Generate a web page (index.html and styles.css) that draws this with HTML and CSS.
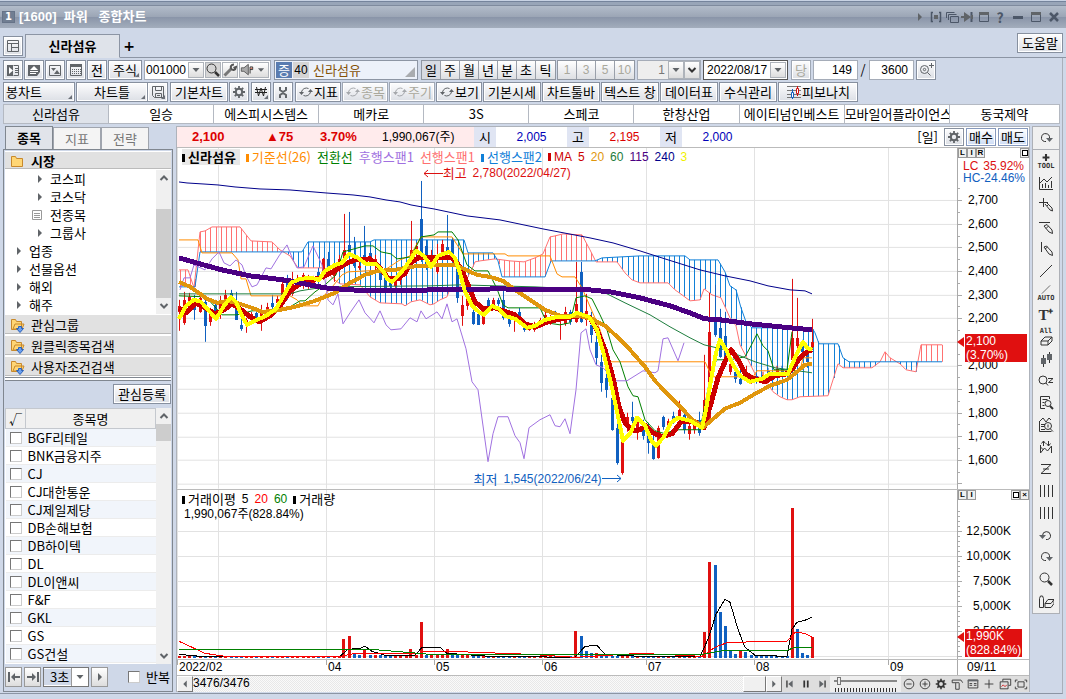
FILE: index.html
```html
<!DOCTYPE html>
<html lang="ko">
<head>
<meta charset="utf-8">
<title>[1600] 파워 종합차트</title>
<link rel="stylesheet" href="styles.css">
</head>
<body>
<svg class="defs" aria-hidden="true">
  <symbol id="i-layout" viewBox="0 0 16 16"><path d="M2.500 2.500h11v11h-11zM2.500 5.500h11M6.500 5.500v8M6.500 9.500h7"/></symbol>
  <symbol id="i-panel" viewBox="0 0 16 16"><path class="f" d="M2 3h6v11H2z"/><path d="M8.500 3.500h5v10h-5M10 6.500h3M10 8.500h3M10 10.500h3"/><path class="w" d="M4 5l4 3.500L4 12z"/></symbol>
  <symbol id="i-eject" viewBox="0 0 16 16"><path class="f" d="M2 3h12v7l-3 4H2z"/><path class="w" d="M8 4l4 4H4zM4 9h8v1H4zM4 11h6v1H4z"/></symbol>
  <symbol id="i-swap" viewBox="0 0 16 16"><path d="M2.500 3.500h11v10h-11z"/><path class="f" d="M4 6h5L6.500 9zM7 12l3-4 3 4z"/></symbol>
  <symbol id="i-cal" viewBox="0 0 16 16"><path d="M2.500 2.500h11v11h-11z"/><path class="f" d="M2 2h12v3H2z"/><path stroke-dasharray="1 1" d="M4 7.500h9M4 9.500h9M4 11.500h9"/></symbol>
  <symbol id="i-glass" viewBox="0 0 16 16"><circle cx="6.500" cy="6.500" r="4.500"/><path stroke-width="2.500" d="M10 10l4 4"/></symbol>
  <symbol id="i-wrench" viewBox="0 0 16 16"><path stroke-width="3" stroke="#777" d="M2.500 13.500L9 7"/><path stroke-width="2" stroke="#555" d="M12 2.500c-3 0-4 2.500-2.500 4.500s4 1 4.500-2l-2.500 1"/></symbol>
  <symbol id="i-horn" viewBox="0 0 16 16"><path fill="#aaa" stroke="#555" d="M1.500 5.500h3l5-4v12l-5-4h-3z"/><path stroke="#222" d="M11.500 12V4.500h3v3h-3"/><path stroke="#d04020" d="M12 6h2"/></symbol>
  <symbol id="i-gear" viewBox="0 0 16 16"><circle cx="8" cy="8" r="3.200" stroke-width="2"/><path stroke-width="1.800" d="M8 2v2.500M8 11.500V14M2 8h2.500M11.500 8H14M3.800 3.800l1.700 1.700M10.500 10.500l1.700 1.700M3.800 12.200l1.700-1.700M10.500 5.500l1.700-1.700"/></symbol>
  <symbol id="i-save" viewBox="0 0 16 16"><path d="M2.500 2.500h11v11h-9l-2-2zM5.500 2.500v4h6v-4M5.500 13.500v-4h6v4M7 11.500h3"/></symbol>
  <symbol id="i-fork" viewBox="0 0 16 16"><path stroke-width="2" d="M5 3v3l3 2 3-2V3M8 7v2M5 14v-3l3-2 3 2v3"/></symbol>
  <symbol id="i-cycle" viewBox="0 0 16 16"><path d="M3.500 8a5 5 0 0 1 7-3.500M12.500 8a5 5 0 0 1-7 3.500"/><path class="f" d="M1 8h5l-2.500 3zM10 8h5l-2.500-3z"/></symbol>
  <symbol id="i-fibo" viewBox="0 0 16 16"><path d="M1 2.500h14M1 6.500h14M1 10.500h14M1 13.500h14" stroke="#777"/><path d="M6.500 5v10" stroke="#1460c0"/><path d="M5.500 8.500h2v5h-2z" fill="#fff" stroke="#1460c0"/><path d="M11.500 2v10" stroke="#d01010"/><path d="M10.500 4.500h2v5h-2z" fill="#fff" stroke="#d01010"/></symbol>
  <symbol id="i-zoomset" viewBox="0 0 16 16"><circle cx="6.500" cy="7.500" r="4"/><circle cx="6.500" cy="7.500" r="1.200"/><path d="M9.500 10.500l3 3M11 3.500h5M13.500 1v5"/></symbol>
  <symbol id="i-redo" viewBox="0 0 16 16"><path d="M8 11.500H6.500a4 4 0 1 1 5-3.500"/><path class="f" d="M8 8h7l-3.500 4z"/></symbol>
  <symbol id="i-undo" viewBox="0 0 16 16"><path d="M8 12.500h1.500a4 4 0 1 0-5-4"/><path class="f" d="M1 8h7l-3.500 4z"/></symbol>
  <symbol id="i-plus" viewBox="0 0 16 16"><path d="M8 3v10M3 8h10"/></symbol>
  <symbol id="i-bold-plus" viewBox="0 0 16 16"><path stroke-width="3" d="M8 3v10M3 8h10"/></symbol>
  <symbol id="i-chart" viewBox="0 0 16 16"><path d="M1.500 2v12.500H15M2 8l4-4 3 3 5-5M4.500 13V9M7.500 13V8M10.500 13v-3M13.500 13V6"/></symbol>
  <symbol id="i-pencross" viewBox="0 0 16 16"><path d="M1 5.500h9M5.500 1v9M7 7l5 6 2.500 1L14 11 9 6M9 9l2-2"/></symbol>
  <symbol id="i-penline" viewBox="0 0 16 16"><path d="M1 3.500h11M6 7l5 6 3.500 1.500L14 11 9 5.500zM8 9.500l2.500-2.500"/></symbol>
  <symbol id="i-penvert" viewBox="0 0 16 16"><path d="M3.500 1v10M6 6l5 7 3.500 1.500L14 11 8.500 5zM7 8l2.500-2"/></symbol>
  <symbol id="i-line" viewBox="0 0 16 16"><path d="M2 14L14 2"/></symbol>
  <symbol id="i-erase" viewBox="0 0 16 10"><path d="M3 5.500l4-4h7l-4 4zM3 5.500v4h7l4-4v-4M10 5.500v4"/></symbol>
  <symbol id="i-candle" viewBox="0 0 16 16"><path d="M5.500 4v12M11.500 1v11"/><path class="f" d="M3 7h5v6H3zM9 3h5v6H9z"/></symbol>
  <symbol id="i-findz" viewBox="0 0 16 16"><circle cx="5" cy="7" r="4"/><path d="M8 10l2 2.500M10 5.500h5L10.500 9.500H15"/></symbol>
  <symbol id="i-docfind" viewBox="0 0 16 16"><path d="M7 13.500H2.500v-12h9V4M4.500 4.500h5M4.500 7.500h2M4.500 10.500h2"/><circle cx="10" cy="8.500" r="3"/><path stroke-width="2" d="M12 11l3 3"/></symbol>
  <symbol id="i-chartfind" viewBox="0 0 16 16"><path d="M1.500 4v10.500h12M2 4l3-3 3 4 3-4 2 2M3 7.500h4M3 9.500h3M3 12.500h4"/><circle cx="10" cy="9" r="3.500"/><path d="M10 7.500v3M12 11.500l3 3"/></symbol>
  <symbol id="i-wave" viewBox="0 0 16 16"><path d="M2.500 6v8l4-5 3 3 4-5v7M2.500 8l3 3M5.500 2v5M3.500 4.500l2-2.500 2 2.500M10.500 2v5M8.500 4.500l2 2.500 2-2.500"/></symbol>
  <symbol id="i-zig" viewBox="0 0 16 16"><path d="M3 3.500h10L3 12.500h10M5 8h6"/></symbol>
  <symbol id="i-bars" viewBox="0 0 16 16"><path d="M2.500 2v12M6.500 2v12M10.500 2v12M14.500 2v12"/></symbol>
  <symbol id="i-bottle" viewBox="0 0 16 16"><path d="M1.500 5.500v9h4v-9L4.500 3h-2zM7 10.500l3-4h6l-3 4zM7 10.500v4h6l3-4v-4"/></symbol>
  <symbol id="i-folder" viewBox="0 0 16 16"><path fill="#ffd675" stroke="#c8892c" d="M2.500 3.500h4l1 2h6v8h-11z"/></symbol>
  <symbol id="i-folderdn" viewBox="0 0 16 16"><path fill="#ffd675" stroke="#c8892c" d="M2.500 2.500h4l1 2h5v8h-10zM4 12l2-5h9l-2 5z"/><path fill="#6aa0f0" stroke="#2c62b8" d="M9.500 9.500h3v2h2l-3.500 4-3.500-4h2z"/></symbol>
  <symbol id="i-doc" viewBox="0 0 16 16"><path d="M3.500 3.500h9v9h-9zM5 6.500h6M5 8.500h6M5 10.500h6"/></symbol>
  <symbol id="i-up" viewBox="0 0 16 16"><path stroke-width="2" d="M4.500 10L8 6.500l3.500 3.500"/></symbol>
  <symbol id="i-down" viewBox="0 0 16 16"><path stroke-width="2" d="M4.500 6L8 9.500 11.500 6"/></symbol>
  <symbol id="i-tri" viewBox="0 0 16 16"><path class="f" d="M4.500 6h7L8 10z"/></symbol>
  <symbol id="i-right" viewBox="0 0 16 16"><path class="f" d="M6 4l4 4-4 4z"/></symbol>
  <symbol id="i-left" viewBox="0 0 16 16"><path class="f" d="M10 4L6 8l4 4z"/></symbol>
  <symbol id="i-first" viewBox="0 0 16 16"><path stroke-width="2" d="M3 3v10M6 8h8"/><path class="f" d="M9 4v8L5 8z"/></symbol>
  <symbol id="i-last" viewBox="0 0 16 16"><path stroke-width="2" d="M13 3v10M2 8h8"/><path class="f" d="M7 4v8l4-4z"/></symbol>
  <symbol id="i-prev" viewBox="0 0 16 16"><path stroke-width="1.500" d="M4.500 4v8"/><path class="f" d="M11 4v8L6 8z"/></symbol>
  <symbol id="i-pause" viewBox="0 0 16 16"><path stroke-width="2" d="M6 4v8M10 4v8"/></symbol>
  <symbol id="i-next" viewBox="0 0 16 16"><path stroke-width="1.500" d="M11.500 4v8"/><path class="f" d="M5 4v8l5-4z"/></symbol>
  <symbol id="i-zin" viewBox="0 0 16 16"><circle cx="8" cy="8" r="5.500"/><path d="M5 8h6M8 5v6"/></symbol>
  <symbol id="i-zout" viewBox="0 0 16 16"><circle cx="8" cy="8" r="5.500"/><path d="M5 8h6"/></symbol>
  <symbol id="i-hammer" viewBox="0 0 16 16"><path d="M2.500 3.500h10l2 3M2.500 3.500v3h8M6.500 7v7h4V7"/></symbol>
  <symbol id="i-table" viewBox="0 0 16 16"><path d="M2.500 3.500h11v9h-11zM4 7.500h3M9 7.500h3M4 9.500h3M9 9.500h3"/><path class="f" d="M2 3h12v2H2z"/></symbol>
  <symbol id="i-copy" viewBox="0 0 16 16"><path d="M5.500 5V2.500h9v7H12M2.500 5.500h9v8h-9z"/><path stroke="#d01010" d="M4 11l2-2 2 2 2-2"/></symbol>
  <symbol id="i-full" viewBox="0 0 16 16"><path d="M4.500 5.500h7v6h-7zM1.500 6V3.500H4M12 3.500h2.500V6M1.500 11v2.500H4M12 13.500h2.500V11"/></symbol>
  <symbol id="i-braces" viewBox="0 0 16 16"><path stroke-width="1.500" d="M5 3.500H3.500v9H5M11 3.500h1.500v9H11"/><path class="f" d="M6 6h4v4H6z"/></symbol>
  <symbol id="i-stack" viewBox="0 0 16 16"><path d="M6.500 7.500h8v6h-8zM4.500 11V5.500h8M2.500 9V3.500h8"/></symbol>
  <symbol id="i-pin" viewBox="0 0 16 16"><path d="M11.500 3v10" stroke-width="2"/><path class="f" d="M4 3l7 5-7 5V9H1V7h3zM11 6h2v4h-2z"/></symbol>
  <symbol id="i-win" viewBox="0 0 16 16"><path d="M3.500 4.500h9v8h-9z"/><path class="f" d="M3 3h10v3H3z"/></symbol>
  <symbol id="i-min" viewBox="0 0 16 16"><path stroke-width="3" d="M3 8.500h10"/></symbol>
  <symbol id="i-close" viewBox="0 0 16 16"><path stroke-width="2.500" d="M4 4l8 8M12 4l-8 8"/></symbol>
  <symbol id="i-won" viewBox="0 0 16 16"><path stroke="#222" d="M3.500 3l2 9L8 4l2.500 8 2-9M2 5.500h12M2 8.500h12"/></symbol>
</svg>

<header class="titlebar">
  <span class="num">1</span>
  <h1>[1600]&nbsp; 파워&nbsp;&nbsp; 종합차트</h1>
  <div class="winctl">
    <button aria-label="펼치기"><svg><use href="#i-right"/></svg></button><button aria-label="연동"><svg><use href="#i-braces"/></svg></button><button aria-label="복사"><svg><use href="#i-stack"/></svg></button><button aria-label="고정"><svg><use href="#i-pin"/></svg></button><button aria-label="창"><svg><use href="#i-win"/></svg></button><button aria-label="도움">?</button><button aria-label="최소화"><svg><use href="#i-min"/></svg></button><button aria-label="최대화"><svg><use href="#i-win"/></svg></button><button aria-label="닫기"><svg><use href="#i-close"/></svg></button>
  </div>
</header>

<nav class="tabs">
  <button class="btn sq" aria-label="레이아웃"><svg><use href="#i-layout"/></svg></button>
  <button class="tab">신라섬유</button>
  <button class="add" aria-label="탭 추가">+</button>
  <button class="btn help">도움말</button>
</nav>

<div class="work">
  <div class="bar">
    <button class="btn sq" aria-label="패널"><svg><use href="#i-panel"/></svg></button>
    <button class="btn sq" aria-label="상단"><svg><use href="#i-eject"/></svg></button>
    <button class="btn sq" aria-label="교체"><svg><use href="#i-swap"/></svg></button>
    <button class="btn sq" aria-label="달력"><svg><use href="#i-cal"/></svg></button>
    <button class="btn sq">전</button>
    <button class="btn w34 corner">주식</button>
    <div class="group code">
      <input aria-label="종목코드" value="001000">
      <button class="mini" aria-label="목록"><svg><use href="#i-tri"/></svg></button>
      <button class="mini dark" aria-label="검색"><svg><use href="#i-glass"/></svg></button>
      <button class="mini" aria-label="설정"><svg><use href="#i-wrench"/></svg></button>
      <button class="mini wide" aria-label="음성"><svg><use href="#i-horn"/></svg><svg><use href="#i-tri"/></svg></button>
    </div>
    <div class="group stock corner"><b class="kind">증</b><span class="rate">40</span><span>신라섬유</span></div>
    <div class="seg period">
      <button class="on">일</button><button>주</button><button>월</button><button>년</button><button>분</button><button>초</button><button>틱</button>
    </div>
    <div class="seg off">
      <button disabled>1</button><button disabled>3</button><button disabled>5</button><button disabled>10</button>
    </div>
    <div class="group unit">
      <input aria-label="단위" value="1" disabled><button class="mini" aria-label="단위 목록"><svg><use href="#i-tri"/></svg></button><button class="mini" aria-label="단위 선택"><svg><use href="#i-down"/></svg></button>
    </div>
    <div class="group date"><input aria-label="날짜" value="2022/08/17"><button class="mini" aria-label="날짜 선택"><svg><use href="#i-tri"/></svg></button></div>
    <button class="btn sq" disabled>당</button>
    <input class="box" aria-label="표시 개수" value="149"><span class="slash">/</span><input class="box" aria-label="전체 개수" value="3600">
    <button class="btn sq last" aria-label="확대 설정"><svg><use href="#i-zoomset"/></svg></button>
  </div>

  <div class="bar second">
    <button class="btn w72 lt corner">봉차트</button>
    <div class="pair"><button class="btn w72 corner">차트틀</button><button class="btn sq corner" aria-label="저장"><svg><use href="#i-save"/></svg></button></div>
    <button class="btn w58">기본차트</button>
    <button class="btn sq" aria-label="환경"><svg><use href="#i-gear"/></svg></button>
    <button class="btn sq corner" aria-label="원화"><svg><use href="#i-won"/></svg></button>
    <button class="btn sq" aria-label="도구"><svg><use href="#i-fork"/></svg></button>
    <button class="btn w46"><svg><use href="#i-cycle"/></svg>지표</button>
    <button class="btn w46" disabled><svg><use href="#i-cycle"/></svg>종목</button>
    <button class="btn w46" disabled><svg><use href="#i-cycle"/></svg>주기</button>
    <button class="btn w46"><svg><use href="#i-cycle"/></svg>보기</button>
    <button class="btn w58">기본시세</button>
    <button class="btn w58">차트툴바</button>
    <button class="btn w58">텍스트 창</button>
    <button class="btn w58">데이터표</button>
    <button class="btn w58">수식관리</button>
    <button class="btn w80"><svg><use href="#i-fibo"/></svg>피보나치</button>
  </div>

  <nav class="recent">
    <button class="on">신라섬유</button><button>일승</button><button>에스피시스템스</button><button>메카로</button><button>3S</button><button>스페코</button><button>한창산업</button><button>에이티넘인베스트</button><button>모바일어플라이언스</button><button>동국제약</button>
  </nav>

  <main class="main">
    <aside class="side">
      <div class="sidetabs"><button class="on">종목</button><button>지표</button><button>전략</button></div>
      <div class="sidebox">
        <button class="sec first"><svg><use href="#i-folder"/></svg>시장</button>
        <div class="scrolled tree">
          <ul>
            <li class="sub"><svg><use href="#i-right"/></svg>코스피</li>
            <li class="sub"><svg><use href="#i-right"/></svg>코스닥</li>
            <li class="sub leaf"><svg><use href="#i-doc"/></svg>전종목</li>
            <li class="sub"><svg><use href="#i-right"/></svg>그룹사</li>
            <li><svg><use href="#i-right"/></svg>업종</li>
            <li><svg><use href="#i-right"/></svg>선물옵션</li>
            <li><svg><use href="#i-right"/></svg>해외</li>
            <li><svg><use href="#i-right"/></svg>해주</li>
          </ul>
          <div class="vscroll"><svg><use href="#i-up"/></svg><i class="gap"></i><i class="thumb"></i><svg><use href="#i-down"/></svg></div>
        </div>
        <button class="sec"><svg><use href="#i-folderdn"/></svg>관심그룹</button>
        <button class="sec"><svg><use href="#i-folderdn"/></svg>원클릭종목검색</button>
        <button class="sec"><svg><use href="#i-folderdn"/></svg>사용자조건검색</button>
        <div class="split"></div>
        <div class="reg"><button class="btn w58">관심등록</button></div>
        <div class="scrolled list">
          <table>
            <thead><tr><th>√</th><th>종목명</th></tr></thead>
            <tbody id="rows"></tbody>
          </table>
          <div class="vscroll"><svg><use href="#i-up"/></svg><i class="thumb short"></i><i class="rest"></i><svg><use href="#i-down"/></svg></div>
        </div>
        <div class="player">
          <button aria-label="처음"><svg><use href="#i-first"/></svg></button>
          <button aria-label="마지막"><svg><use href="#i-last"/></svg></button>
          <div class="sec3"><select aria-label="간격"><option>3초</option></select><svg><use href="#i-tri"/></svg></div>
          <button aria-label="재생"><svg><use href="#i-right"/></svg></button>
          <label><input type="checkbox">반복</label>
        </div>
      </div>
    </aside>

    <section class="center">
      <div class="quote">
        <div class="pink"><b>2,100</b><b>▲75</b><b>3.70%</b><span>1,990,067(주)</span></div>
        <span class="key">시</span><span class="val blue">2,005</span>
        <span class="key">고</span><span class="val red">2,195</span>
        <span class="key">저</span><span class="val blue">2,000</span>
        <span class="day">[일]</span>
        <button class="btn sq" aria-label="설정"><svg><use href="#i-gear"/></svg></button>
        <button class="btn buy">매수</button><button class="btn buy">매도</button>
      </div>

      <div class="pane price">
        <div class="plot">
          <svg id="price" viewBox="177 148 780 341" preserveAspectRatio="none"></svg>
          <div class="legend">
            <b class="mark name">신라섬유</b><span class="mark c-base">기준선(26)</span><span class="c-conv">전환선</span><span class="c-lag">후행스팬1</span><span class="c-s1">선행스팬1</span><span class="mark c-s2">선행스팬2</span><span class="mark c-ma5 n">MA</span><span class="c-ma5 n">5</span><span class="c-ma20 n">20</span><span class="c-ma60 n">60</span><span class="c-ma115 n">115</span><span class="c-ma240 n">240</span><span class="c-ma3 n">3</span>
          </div>
          <div class="note high"><svg viewBox="0 0 20 9"><path d="M20 4.500H1M5 1L1 4.500 5 8"/></svg><span>최고</span><span class="n">2,780(2022/04/27)</span></div>
          <div class="note low"><span>최저</span><span class="n">1,545(2022/06/24)</span><svg viewBox="0 0 20 9"><path d="M0 4.500h19M15 1l4 3.500L15 8"/></svg></div>
        </div>
        <div class="axis" id="priceAxis">
          <div class="axhead"><button>L</button><button>I</button><button>R</button><button class="end" aria-label="최대화"><i></i></button></div>
          <p class="lc"><span>LC</span><span>35.92%</span></p>
          <p class="hc"><span>HC</span><span>-24.46%</span></p>
        </div>
      </div>

      <div class="pane volume">
        <div class="plot">
          <svg id="volume" viewBox="177 491 780 169" preserveAspectRatio="none"></svg>
          <div class="legend vol">
            <span class="mark">거래이평</span><span class="n">5</span><span class="v20 n">20</span><span class="v60 n">60</span><span class="mark">거래량</span>
          </div>
          <div class="legend vol2 n">1,990,067주(828.84%)</div>
        </div>
        <div class="axis" id="volAxis">
          <div class="axhead"><button>L</button><button>I</button><button class="end" aria-label="최대화"><i></i></button><button>×</button></div>
        </div>
      </div>

      <div class="time n"><div class="months" id="months"></div><span class="lastday">09/11</span></div>

      <div class="foot">
        <button class="arrow" aria-label="이전"><svg><use href="#i-left"/></svg></button>
        <div class="track n">3476/3476</div>
        <button class="arrow handle" aria-label="스크롤"></button>
        <button class="arrow" aria-label="다음"><svg><use href="#i-right"/></svg></button>
        <div class="ctl"><button aria-label="뒤로"><svg><use href="#i-prev"/></svg></button><button aria-label="멈춤"><svg><use href="#i-pause"/></svg></button><button aria-label="앞으로"><svg><use href="#i-next"/></svg></button></div>
        <div class="slide"><input type="range" aria-label="속도" value="5"></div>
        <div class="ctl"><button aria-label="축소"><svg><use href="#i-zout"/></svg></button><button aria-label="확대"><svg><use href="#i-zin"/></svg></button><button aria-label="환경"><svg><use href="#i-gear"/></svg></button><button aria-label="도구"><svg><use href="#i-hammer"/></svg></button><button aria-label="표"><svg><use href="#i-table"/></svg></button><button aria-label="십자선"><svg><use href="#i-plus"/></svg></button><button aria-label="복사"><svg><use href="#i-copy"/></svg></button><button aria-label="전체"><svg><use href="#i-full"/></svg></button></div>
      </div>
    </section>

    <div class="toolcol"><div class="tools" id="tools"></div></div>
  </main>
</div>
<script src="app.js"></script>
</body>
</html>
```
FILE: styles.css
```css
* { box-sizing: border-box; }
body {
  margin: 0; min-height: 100vh; display: flex; flex-direction: column;
  background: #cfd8e8; color: #000;
  font: 13px/16px "Noto Sans CJK KR", sans-serif;
}
button, input, select { font: inherit; color: inherit; margin: 0; }
button { padding: 0; border: 0; background: none; white-space: nowrap; }
h1, p, ul { margin: 0; padding: 0; list-style: none; font-size: 13px; }
svg { width: 16px; height: 16px; flex: none; fill: none; stroke: #606468; stroke-width: 1; display: block; }
svg .f { fill: #606468; stroke: none; }
svg .w { fill: #fff; stroke: none; }
.defs { position: absolute; width: 0; height: 0; }
.n, .bar input, .off button, .axis, .val, .pink, .rate { font-family: "Liberation Sans", "Noto Sans CJK KR", sans-serif; font-size: 12px; }

.titlebar {
  height: 28px; padding: 5px 4px 0 2px; display: flex; align-items: center; gap: 4px; color: #fff;
  background: linear-gradient(#c8d3e4 0 1px, #75849c 1px 2px, #98a5b8 2px 5px, #7f8b9e 5px 6px, #b2bcca 6px, #9ba5b5 17px, #8994a8 17px, #a3adbc 28px);
}
.num { width: 13px; height: 12px; background: #717e92; border: 1px solid #667388; font: bold 10px/10px "DejaVu Sans"; text-align: center; }
.titlebar h1 { font-family: "Liberation Sans", "Noto Sans CJK KR", sans-serif; font-weight: bold; }
.winctl { margin-left: auto; display: flex; }
.winctl button { width: 16px; height: 16px; font-weight: bold; font-size: 14px; color: #4c5768; }
.winctl button:nth-child(n+7) { margin-left: 2px; }
.winctl svg { stroke: #4c5768; }
.winctl svg .f { fill: #4c5768; }

.btn {
  height: 20px; border: 1px solid #87909f; box-shadow: inset 0 0 0 1px #fff;
  background: linear-gradient(#fdfdfe, #dcdfe5); display: flex; align-items: center; justify-content: center;
}
.btn:disabled { color: #a9a89c; border-color: #9fa7b4; }
.btn:disabled svg { opacity: .5; }
.sq { width: 20px; flex: none; }
.w34 { width: 34px; } .w46 { width: 46px; } .w58 { width: 58px; } .w72 { width: 72px; } .w80 { width: 80px; }
.lt { justify-content: flex-start; padding-left: 2px; }
.corner { position: relative; }
.corner::after {
  content: ""; position: absolute; right: 2px; bottom: 2px;
  border: 2px solid; border-color: transparent #6b7078 #6b7078 transparent;
}

.tabs { height: 30px; padding: 5px 3px 0; display: flex; align-items: flex-end; gap: 2px; border-bottom: 1px solid #8c95a4; }
.tabs .btn.sq { margin-bottom: 1px; }
.tab { width: 95px; height: 24px; margin-bottom: -1px; border: 1px solid #8c95a4; border-bottom-color: #dfe3ea; background: #dfe3ea; font-weight: bold; }
.add { font: bold 14px/22px "DejaVu Sans"; width: 14px; }
.help { width: 46px; margin-left: auto; align-self: flex-start; }

.work { flex: 1; display: flex; flex-direction: column; margin: 0 3px 5px 0; padding: 2px 2px 1px 3px; border-right: 1px solid #a9afb9; border-bottom: 1px solid #8c95a4; gap: 2px; }
.bar { display: flex; gap: 1px; align-items: center; height: 20px; }
.bar > .btn, .second > * { flex: none; }
.group { height: 20px; display: flex; align-items: center; gap: 1px; border: 1px solid #a5acb8; background: #fff; padding: 1px; flex: none; }
.group input { border: 0; background: none; min-width: 0; flex: 1; padding: 0 0 0 2px; height: 16px; }
.code { width: 127px; margin: 0 2px 0 1px; }
.group.code input { padding: 0; }
.mini { width: 16px; height: 16px; border: 1px solid #aeb3ba; background: linear-gradient(#fff, #ddd); display: flex; align-items: center; justify-content: center; overflow: hidden; flex: none; }
.mini svg { stroke: #333; }
.mini svg .f { fill: #000; }
.mini.dark { background: #d6d6d6; }
.mini.wide { width: 30px; }
.mini.wide svg { width: 14px; }
.stock { width: 144px; background: #ecf1fa; color: #855208; border-color: #8c95a4; margin-right: 2px; }
.stock.corner::after { border-width: 5px; border-color: transparent #a9acb0 #a9acb0 transparent; }
.kind { width: 16px; height: 16px; background: #5a7cb0; color: #fff; text-align: center; line-height: 16px; font-weight: normal; }
.rate { width: 16px; height: 16px; line-height: 16px; background: #d5d5d5; color: #000; text-align: center; margin-right: 3px; }
.seg { display: flex; height: 20px; border: 1px solid #9097a2; flex: none; }
.seg button { width: 19px; background: linear-gradient(#fff, #dddfe3); border-right: 1px solid #9aa0aa; }
.seg button:last-child { border-right: 0; }
.seg .on { background: #d8dbe2; }
.seg.off button { color: #a9a89c; }
.unit { width: 64px; margin-left: 1px; color: #777; padding: 0; gap: 0; background: #eee; }
.unit input, .box { text-align: right; }
.unit input { padding-right: 3px; }
.unit .mini { height: 18px; }
.unit .mini .f { fill: #888; }
.date { width: 85px; border: 1px solid #555; margin: 0 2px 0 1px; }
.box { width: 45px; height: 20px; border: 1px solid #a5acb8; background: #fff; padding: 0 5px; margin-left: 1px; }
.slash { width: 8px; text-align: center; }
.last { margin-left: 1px; }
.pair { display: flex; margin-right: 1px; }
.second .sq { margin-right: 1px; }
.pair .btn + .btn { margin: 0; border-left: 0; }

.recent { display: flex; height: 20px; border: 1px solid #b4b9c2; flex: none; background: #fff; }
.recent button { flex: 1 1 0; min-width: 0; overflow: hidden; border-right: 1px solid #b4b9c2; }
.recent button:last-child { flex-grow: 1.05; border: 0; }
.recent .on { background: #dfe3ea; }

.main { flex: 1; display: flex; min-height: 0; }
.side { width: 170px; margin-right: 3px; display: flex; flex-direction: column; flex: none; }
.sidetabs { display: flex; padding-left: 2px; height: 23px; align-items: flex-end; }
.sidetabs button { width: 48px; height: 22px; border: 1px solid #a0a5ae; border-bottom: 0; background: #f4f4f4; color: #777; }
.sidetabs .on { height: 23px; background: #e1e4ea; color: #000; font-weight: bold; border-color: #808790; }
.sidebox { flex: 1; display: flex; flex-direction: column; border: 1px solid #808790; padding: 1px; min-height: 0; }
.sec { height: 21px; width: 100%; flex: none; display: flex; align-items: center; gap: 6px; padding-left: 4px; background: #e1e1e1; border: solid #fff; border-width: 1px 0; box-shadow: inset 0 -1px #bbb; }
.sec.first { font-weight: bold; height: 19px; }
.scrolled { display: flex; background: #fff; overflow: hidden; }
.tree { height: 144px; flex: none; }
.tree ul { flex: 1; }
.tree li { height: 18px; display: flex; align-items: center; gap: 2px; padding-left: 6px; }
.tree .sub { padding-left: 27px; }
.tree .leaf { padding-left: 24px; gap: 5px; }
.tree .leaf svg { stroke: #999; }
.tree svg .f { fill: #777; }
.vscroll { width: 15px; background: #f0f0f0; display: flex; flex-direction: column; align-items: center; flex: none; }
.vscroll .gap { height: 23px; }
.vscroll .thumb { flex: 1; width: 15px; background: #cdcdcd; }
.vscroll .short { flex: none; height: 17px; }
.vscroll .rest { flex: 1; }
.split { height: 4px; flex: none; background: #fff; border: solid #808790; border-width: 1px 0; }
.reg { display: flex; justify-content: flex-end; padding: 3px 0 4px; background: #cfd8e8; }
.list { flex: 1 1 0; min-height: 0; align-items: stretch; }
.list table { flex: 1; border-collapse: collapse; align-self: flex-start; }
.list th { height: 20px; padding: 0; background: #f0f0f0; border: 1px solid #c4c8ce; font-weight: normal; }
.list td { height: 18px; padding: 0 0 0 2px; border-bottom: 1px solid #ececec; }
.list td:first-child { width: 20px; padding-left: 4px; }
.list tr:nth-child(odd) td { background: #f1f5fb; }
.list td label { display: block; line-height: 17px; }
input[type=checkbox] { appearance: none; width: 12px; height: 12px; margin: 0; background: #fff; border: 1px solid; border-color: #777 #ccc #ccc #777; display: block; }
.player { height: 26px; flex: none; display: flex; align-items: center; padding-bottom: 1px; gap: 2px; background: #cfd8e8; }
.player button { width: 17px; height: 20px; border: 1px solid #999; background: linear-gradient(#fff, #ddd); }
.sec3 { width: 46px; height: 20px; display: flex; align-items: center; background: #fff; border: 1px solid #777; }
.sec3 select { appearance: none; width: 27px; height: 16px; line-height: 16px; border: 0; padding: 0 0 0 6px; background: #cfd8e8; }
.sec3 svg { border-left: 1px solid #999; height: 18px; width: 17px; }
.player label { display: flex; align-items: center; gap: 6px; margin-left: auto; padding-right: 1px; }

.center { flex: 1; min-width: 0; display: flex; flex-direction: column; background: #fff; border: solid #aeb3bb; border-width: 1px 1px 0; }
.quote { height: 21px; flex: none; display: flex; align-items: center; border-bottom: 1px solid #bbb; }
.pink { width: 297px; height: 20px; background: #ffebec; display: flex; align-items: center; padding-left: 15px; color: #dc0000; }
.pink b { width: 74px; font-size: 13px; }
.pink b + b { width: 54px; }
.pink b + b + b { width: 62px; }
.pink span { color: #000; }
.key { width: 22px; height: 20px; line-height: 20px; background: #e0e5f3; text-align: center; }
.val { width: 71px; text-align: center; }
.blue { color: #0000b8; } .red { color: #dc0000; }
.day { margin-left: auto; padding-right: 6px; }
.quote .btn { height: 18px; margin-right: 2px; }
.buy { width: 30px; background: linear-gradient(#fff, #cddcf5); border-color: #8699bd; }
.quote .buy:last-child { margin-right: 1px; }

.pane { display: flex; min-height: 0; border-bottom: 1px solid #bbb; }
.price { flex: 342 1 0; }
.volume { flex: 170 1 0; }
.plot { flex: 1; position: relative; min-width: 0; }
.plot > svg { position: absolute; inset: 0; width: 100%; height: 100%; shape-rendering: crispEdges; }
.axis { width: 72px; border-left: 1px solid #aaa; position: relative; flex: none; }
.axhead { display: flex; height: 10px; }
.axhead button { width: 9px; height: 10px; border: 1px solid #999; background: #f0f0f0; font: bold 8px/8px "Liberation Sans"; }
.axhead .end { margin-left: auto; }
.axhead i { display: block; width: 6px; height: 6px; margin: 0 auto; border: 1px solid #000; background: #fff; }
.axis p { display: flex; justify-content: space-between; padding: 0 5px; line-height: 12px; font-size: 12px; }
.lc { color: #dc1010; margin-top: 2px; } .hc { color: #1060c0; }
.axis .lab { position: absolute; left: 10px; transform: translateY(-50%); }
#volAxis .lab { left: auto; right: 18px; }
.axis .tick { position: absolute; left: 0; width: 4px; height: 1px; background: #aaa; }
.axis .minor { width: 2px; }
.axis .flag { position: absolute; left: 7px; width: 62px; height: 28px; background: #e01010; color: #fff; line-height: 14px; padding-left: 1px; margin-top: -8px; }
#volAxis .flag { width: 57px; }
.flag::before { content: ""; position: absolute; left: -8px; top: 3px; border: 5px solid transparent; border-right: 7px solid #e01010; border-left: 0; }
.legend { position: absolute; left: 5px; top: 1px; display: flex; gap: 6px; white-space: nowrap; }
.mark::before { content: ""; display: inline-block; width: 3px; height: 8px; background: currentColor; margin-right: 3px; }
.name { background: #e8e8e8; padding-right: 4px; }
.c-base { color: #ff8c00; } .c-conv { color: #008000; } .c-lag { color: #a070e0; } .c-s1 { color: #ff7070; }
.c-s2 { color: #1080d8; } .c-ma5 { color: #cc0000; } .c-ma20 { color: #e0960c; } .c-ma60 { color: #1c7c3c; }
.c-ma115 { color: #4b0082; } .c-ma240 { color: #00008b; } .c-ma3 { color: #f0f000; }
.v20 { color: #f00; } .v60 { color: #008000; }
.vol2 { top: 16px; left: 7px; }
.note { position: absolute; display: flex; align-items: center; white-space: nowrap; }
.note span + span { margin-left: 6px; }
.note svg { width: 20px; height: 9px; stroke: currentColor; }
.high { left: 31.500%; top: 17px; color: #dc1010; }
.low { right: 43%; bottom: 2px; color: #1060c0; }

.time { height: 16px; flex: none; display: flex; border-bottom: 1px solid #bbb; line-height: 15px; }
.months { flex: 1; position: relative; }
.months span { position: absolute; padding-left: 2px; }
.months span::before { content: ""; position: absolute; left: 0; top: 0; width: 1px; height: 5px; background: #aaa; }
.lastday { width: 72px; border-left: 1px solid #aaa; padding-left: 9px; }
.foot { height: 16px; flex: none; display: flex; background: #e9e9e9; }
.arrow { width: 16px; border: 1px solid; border-color: #fff #777 #777 #fff; background: #f0f0f0; display: flex; align-items: center; justify-content: center; }
.arrow svg, .ctl svg { height: 14px; stroke: #333; }
.arrow .f, .ctl .f { fill: #222; }
.handle { width: 23px; }
.track { flex: 1; background: repeating-conic-gradient(#e8e8e8 0 25%, #fafafa 0 50%) 0 0 / 2px 2px; line-height: 15px; }
.ctl { display: flex; background: #dedede; }
.slide { width: 71px; padding: 1px 4px; background: repeating-linear-gradient(90deg, #333 0 1px, transparent 1px 3px) 5px 100% / 61px 4px no-repeat #eee; }
.slide input { appearance: none; width: 100%; height: 8px; display: block; background: linear-gradient(#888 0 2px, transparent 2px) 0 3px no-repeat; }
.slide input::-webkit-slider-thumb { appearance: none; width: 4px; height: 8px; background: #eee; border: 1px solid #777; }

.toolcol { width: 30px; padding-left: 2px; flex: none; }
.tools { background: #f0f0f0; border: 1px solid #adb0b6; padding-bottom: 1px; }
.tools button { display: flex; flex-direction: column; align-items: center; justify-content: center; width: 100%; height: 22px; font: bold 7px/7px "DejaVu Sans Mono"; color: #333; }
.tools button:first-child { height: 23px; border-bottom: 1px solid #adb0b6; }
.tools svg { stroke: #333; }
.tools .f { fill: #333; }
.tools .labeled svg { height: 11px; }
.tools big { font: bold 15px/16px "Liberation Serif"; }
```
FILE: app.js
```js
const el = (tag, cls, parent, text) => {
  const n = document.createElement(tag);
  if (cls) n.className = cls;
  if (text) n.textContent = text;
  parent.append(n);
  return n;
};
const byId = id => document.getElementById(id);

/* stock list */
['BGF리테일', 'BNK금융지주', 'CJ', 'CJ대한통운', 'CJ제일제당', 'DB손해보험', 'DB하이텍', 'DL', 'DL이앤씨', 'F&F', 'GKL', 'GS', 'GS건설']
  .forEach((name, i) => {
    const tr = el('tr', '', byId('rows'));
    const box = el('input', '', el('td', '', tr));
    box.type = 'checkbox';
    box.id = 's' + i;
    el('label', '', el('td', '', tr), name).htmlFor = box.id;
  });

/* drawing tools */
[['redo'], ['bold-plus', 'TOOL'], ['chart'], ['pencross'], ['penline'], ['penvert'], ['line'], ['line', 'AUTO'], ['', 'T⁺'], ['erase', 'All'],
 ['candle'], ['findz'], ['docfind'], ['chartfind'], ['wave'], ['zig'], ['bars'], ['bars'], ['undo'], ['redo'], ['glass'], ['bottle']]
  .forEach(([icon, label]) => {
    const b = el('button', label ? 'labeled' : '', byId('tools'));
    const svg = icon ? `<svg><use href="#i-${icon}"/></svg>` : '';
    b.innerHTML = label === 'All' ? label + svg : label === 'T⁺' ? '<big>T⁺</big>' : svg + (label || '');
    b.setAttribute('aria-label', label || icon);
  });

/* price pane */
const RED = '#e01010', BLUE = '#1060c0', GRID = '#e2e2e2', STEP = 5.15, X0 = 179.5;
const priceY = v => 342 - (v - 2100) * 0.2363;
const line = (x1, y1, x2, y2, c) => `<path d="M${x1} ${y1}L${x2} ${y2}" stroke="${c}"/>`;
const curve = (pts, c, w = 1) => `<polyline points="${pts}" stroke="${c}" stroke-width="${w}" stroke-linejoin="round"/>`;
const months = [[177, '2022/02'], [218, ''], [326, '04'], [434, '05'], [542, '06'], [646, '07'], [754, '08'], [888, '09']];

const span1 = '179,270 188,270 194,288 200,232 205,231 212,227 240,227 251,241 272,242 280,250 290,256 298,268 325,268 332,278 340,284 360,285 370,297 380,303 402,304 405,306 411,302 420,300 430,305 434,304 440,300 447,297 450,289 458,288 464,284 472,269 475,262 480,261 495,259 510,261 524,262 535,258 543,254 550,237 555,236 563,234 582,235 590,250 596,262 617,262 625,273 632,280 640,283 668,283 675,290 682,295 690,301 700,300 704,289 712,295 721,298 730,318 736,326 740,345 750,364 756,376 765,380 773,392 780,397 787,400 792,400 800,397 828,396 838,364 843,368 872,368 880,362 885,352 890,358 900,364 906,370 916,372 921,345 942,345';
const span2 = '179,287 195,287 200,252 302,252 308,242 370,242 374,240 464,240 468,253 493,253 498,261 502,277 545,277 551,261 595,261 602,258 640,256 685,256 690,260 718,260 725,272 730,286 736,290 741,308 746,322 752,328 812,328 815,333 819,344 838,344 843,358 849,362 942,362';
const parse = s => s.split(' ').map(p => p.split(',').map(Number));
const at = (pts, x) => {
  const i = Math.max(1, pts.findIndex(p => p[0] >= x));
  const [a, b] = [pts[i - 1], pts[i]];
  return a[1] + (b[1] - a[1]) * (x - a[0]) / (b[0] - a[0]);
};

/* candles: colour, high, low, body top, body bottom */
const candles = `r300,331,306,312 r292,325,300,323 r293,312,297,310 b295,320,298,310 r294,313,298,312 b297,342,302,326 r308,326,312,322 b300,317,305,312 r296,319,303,314 r290,308,295,305
b290,300,293,297 b292,320,302,320 b313,331,325,329 r318,333,320,322 r312,320,314,318 b309,320,313,318 r305,331,310,322 r303,315,307,313 b295,309,303,307 r296,305,299,303
r278,305,284,303 b275,300,278,296 r272,296,281,294 r275,288,278,285 r273,289,275,286 r275,289,279,284 r276,286,278,283 b268,284,272,280 r258,280,259,277 b252,276,259,272
r264,282,268,276 r255,272,259,268 r214,262,250,258 b212,254,245,252 b237,268,255,266 r262,270,266,268 b226,262,255,260 b248,270,253,265 r255,272,259,266 b262,285,268,280
b275,292,278,288 b277,291,279,286 r276,288,279,286 r270,285,273,280 r262,276,264,274 r221,267,250,262 r243,258,246,254 b181,262,219,256 b240,270,246,266 r250,268,255,264
r244,274,265,272 r240,258,244,255 b215,256,247,252 b238,262,240,258 b262,303,266,298 r296,326,305,316 r290,310,294,306 b305,325,312,324 b310,325,314,325 r306,325,310,324
b298,312,300,308 r298,308,300,306 b298,306,300,304 b290,320,300,318 b310,327,314,324 r314,332,316,318 b308,322,312,318 b320,332,326,330 r323,331,326,330 r322,332,326,330
r318,328,320,326 r311,322,315,320 r315,325,318,322 b311,322,314,319 r315,340,317,320 r307,326,312,324 b310,325,312,322 r262,323,304,322 b262,323,272,322 r294,326,311,320
b312,343,325,335 b334,365,342,358 b355,392,362,383 b370,398,378,390 b394,431,398,430 b422,465,428,463 r433,475,438,473 r413,432,417,428 b402,430,417,421 r417,440,420,433
b420,440,425,436 b423,454,436,443 b436,460,443,459 r426,459,428,458 b416,430,417,427 r419,432,421,430 b412,424,416,422 r401,422,410,417 b409,434,415,430 r420,440,426,434
r422,434,425,430 b412,436,420,433 r355,430,400,425 r293,425,332,420 b285,337,321,335 b309,358,328,357 b312,366,336,365 r360,375,364,372 b368,383,372,379 b362,385,379,384
r366,382,372,380 r375,384,378,382 b374,384,376,382`.split(/\s+/);
const tail = [[763, 'r372,384,375,380'], [768, 'b368,380,371,378'], [777, 'r366,378,369,376'], [782, 'b366,376,369,374'], [792.5, 'r279,370,338,360'], [797.5, 'r298,350,338,346'], [802.5, 'b340,356,344,352'], [807.5, 'b345,368,350,362'], [812.5, 'r319,350,342,347']];
const candle = (x, s) => {
  const c = s[0] === 'r' ? RED : BLUE, [h, l, t, b] = s.slice(1).split(',').map(Number);
  return `<path d="M${x} ${h}V${l}" stroke="${c}"/><path d="M${x} ${t}V${b}" stroke="${c}" stroke-width="3"/>`;
};

let g = '';
for (let v = 1500; v <= 2700; v += 100) g += line(177, Math.round(priceY(v)) + .5, 957, Math.round(priceY(v)) + .5, GRID);
months.forEach(([x]) => { g += line(x + .5, 148, x + .5, 489, GRID); });
const s1 = parse(span1), s2 = parse(span2);
for (let x = X0; x < 942; x += STEP) {
  const a = at(s1, x), b = at(s2, x);
  g += line(Math.round(x) + .5, a, Math.round(x) + .5, b, a < b ? '#ff7070' : '#1080d8');
}
g += curve(span1, '#ff7070') + curve(span2, '#1080d8');
candles.forEach((s, i) => { g += candle(Math.floor(X0 + i * STEP) + .5, s); });
tail.forEach(([x, s]) => { g += candle(x, s); });
g += curve('179,240 198,240 202,253 232,253 238,260 241,279 246,279 251,296 290,296 297,300 303,306 318,306 322,298 333,286 342,275 348,272 385,270 400,260 410,256 421,237 452,237 463,254 505,254 508,256 550,256 557,274 562,277 575,277 582,288 600,330 610,362 705,362 712,377 753,377 757,371 800,371 803,358 812,358', '#ff8c00')
  + curve('179,296 206,297 222,315 237,315 252,311 285,310 300,301 305,301 315,292 325,285 336,275 343,252 365,246 373,246 381,252 391,254 397,259 411,257 421,237 434,235 438,232 452,232 458,240 467,265 475,271 488,271 497,289 503,305 508,308 540,308 547,323 560,325 570,323 576,298 585,296 592,299 600,315 607,330 613,350 620,362 628,387 633,396 638,397 645,420 655,431 665,434 675,430 700,430 705,405 712,368 717,360 730,360 745,357 751,346 757,334 763,346 768,351 774,370 787,370 792,332', '#008000')
  + curve('180,290 184,278 190,278 194,265 205,270 212,259 219,252 224,263 230,266 236,260 242,265 246,276 252,287 257,285 266,268 271,269 279,256 287,245 293,260 297,268 304,267 309,255 313,246 322,265 325,280 328,300 333,305 338,294 343,324 350,313 359,300 365,313 374,323 380,311 386,325 391,330 401,329 410,318 417,322 421,311 426,319 434,314 437,312 442,319 447,304 452,322 457,319 466,349 472,382 478,390 488,462 493,434 498,417 508,417 515,436 520,443 524,459 529,428 540,420 550,415 555,426 560,427 565,419 570,434 576,390 581,333 586,329 590,350 596,365 603,368 615,381 627,381 643,371 655,373 658,371 663,339 668,338 678,361 684,343', '#a070e0')
  + curve('179,294 240,294 290,294 300,291 325,287 430,286 460,285 535,287 590,290 605,293 625,303 650,315 670,327 690,338 704,345 725,350 755,362 775,368 805,372 812,373', '#1c7c3c')
  + curve('179,182 187,183 203,184 218,185 235,187 260,189 290,190 326,193 353,195 370,197 386,200 400,202 411,205 422,207 434,209 467,216 500,220 543,229 590,238 613,243 640,251 665,259 700,270 725,276 750,281 768,286 790,290 805,291 812,294', '#00008b')
  + curve('179,308 186,313 196,303 205,308 215,314 224,310 232,304 240,309 250,317 259,322 270,316 280,306 290,291 300,284 312,280 320,278 333,272 345,264 355,260 370,259 378,266 388,278 398,279 405,273 412,262 418,258 430,258 452,258 461,268 468,285 475,302 483,309 495,308 503,311 515,315 525,324 535,327 548,322 565,318 580,316 590,318 597,330 605,350 613,378 619,407 625,423 632,431 640,430 646,426 653,433 662,437 672,434 681,422 695,422 704,428 712,400 718,378 725,362 731,350 738,360 745,374 752,378 765,382 775,376 787,374 793,368 800,358 807,352 812,350', '#cc0000', 5)
  + curve('179,282 190,287 200,294 207,299 217,303 228,301 240,304 252,308 262,312 275,311 295,307 315,301 335,293 350,283 365,275 378,271 395,270 410,267 420,266 455,265 466,270 477,275 490,277 503,281 515,290 530,300 545,310 560,316 580,316 592,319 605,326 615,335 630,350 645,367 655,381 670,397 685,412 692,420 704,427 712,420 725,409 740,403 755,394 770,386 787,380 797,372 805,365 812,364', '#e0960c', 4)
  + curve('179,258 200,264 222,270 250,276 275,279 290,281 310,285 325,288 350,290 380,291 410,291 430,290 500,289 540,290 590,290 610,292 640,298 670,306 690,313 705,319 720,320 750,324 790,328 812,330', '#4b0082', 5)
  + curve('179,319 186,306 194,300 201,302 209,311 216,319 224,306 231,297 236,302 241,314 247,325 257,320 266,316 276,309 283,297 291,283 300,279 312,278 319,280 325,271 335,265 342,263 349,254 358,258 366,264 376,264 383,271 387,279 392,282 398,276 404,269 411,259 416,251 424,256 431,267 438,256 449,252 455,258 460,273 465,292 472,306 480,313 484,315 492,306 499,309 505,316 515,319 527,328 535,326 545,320 557,317 570,317 577,313 589,317 597,330 604,355 612,388 617,412 623,441 630,434 637,418 645,426 652,442 656,446 664,437 671,423 678,418 690,421 702,428 706,410 711,380 716,353 720,340 726,350 733,365 740,376 750,382 762,379 770,374 788,374 795,358 803,342 807,348 812,350', '#ffff00', 4);
byId('price').innerHTML = g;

/* volume pane: top of the tall bars, by x */
const tall = [[343, 640, 'r'], [349, 637, 'r'], [354, 654, 'b'], [359, 656, 'b'], [364, 650, 'r'], [410, 650, 'r'], [421, 623, 'r'], [447, 650, 'r'], [452, 654, 'b'], [575, 632, 'r'], [581, 637, 'b'], [586, 652, 'b'], [591, 654, 'b'], [596, 654, 'r'], [704, 633, 'r'], [709, 563, 'r'], [715, 566, 'b'], [720, 613, 'b'], [725, 627, 'b'], [730, 651, 'b'], [735, 655, 'b'], [740, 652, 'r'], [745, 653, 'b'], [751, 656, 'b'], [792, 509, 'r'], [797, 630, 'b'], [802, 654, 'b'], [807, 656, 'b'], [812, 638, 'r']];
g = '';
for (let y = 532; y < 658; y += 25) g += line(177, y + .5, 957, y + .5, GRID);
months.forEach(([x]) => { g += line(x + .5, 491, x + .5, 660, GRID); });
for (let i = 0; i < 123; i++) {
  const x = Math.floor(X0 + i * STEP);
  if (tall.some(t => Math.abs(t[0] - x) < 3)) continue;
  g += `<path d="M${x + .5} 659V${x > 350 && x < 470 ? 656 : 657}" stroke="${candles[i] && candles[i][0] === 'r' ? RED : BLUE}" stroke-width="3"/>`;
}
tall.forEach(([x, y, c]) => { g += `<path d="M${x + .5} 659V${y}" stroke="${c === 'r' ? RED : BLUE}" stroke-width="3"/>`; });
g += curve('179,655 200,657 340,657 348,650 360,649 365,647 372,652 385,656 415,656 422,648 440,648 447,654 490,657 575,658 585,647 597,646 605,655 640,657 700,657 708,640 716,615 725,600 730,603 738,630 745,648 755,656 787,657 792,630 797,623 805,621 812,618', '#000')
  + curve('179,642 190,647 205,654 225,657 340,657 355,654 420,654 425,652 450,652 530,655 575,658 640,654 702,657 715,648 728,643 787,642 795,633 805,634 812,638', '#f00')
  + curve('179,650 370,650 395,652 430,655 702,655 725,651 787,651 795,648 812,648', '#008000');
byId('volume').innerHTML = g;

/* axes */
const put = (host, cls, y, top, h, text) => { el('span', cls, host, text).style.top = ((y - top) / h * 100).toFixed(2) + '%'; };
const pa = byId('priceAxis'), va = byId('volAxis');
for (let v = 1500; v <= 2750; v += 50) put(pa, v % 100 ? 'tick minor' : 'tick', priceY(v), 148, 341);
for (let v = 1600; v <= 2700; v += 100) if (v !== 2100) put(pa, 'lab', priceY(v), 148, 341, v.toLocaleString('en-US'));
put(pa, 'flag', 342, 148, 341, '2,100 (3.70%)');
for (let v = 0; v <= 14500; v += 500) put(va, v % 2500 ? 'tick minor' : 'tick', 657 - v / 100, 491, 169);
for (let v = 2500; v <= 12500; v += 2500) put(va, 'lab', 657 - v / 100, 491, 169, v.toLocaleString('en-US') + 'K');
put(va, 'flag', 638, 491, 169, '1,990K (828.84%)');
months.forEach(([x, t]) => { if (t) el('span', '', byId('months'), t).style.left = ((x - 177) / 780 * 100).toFixed(2) + '%'; });
```
